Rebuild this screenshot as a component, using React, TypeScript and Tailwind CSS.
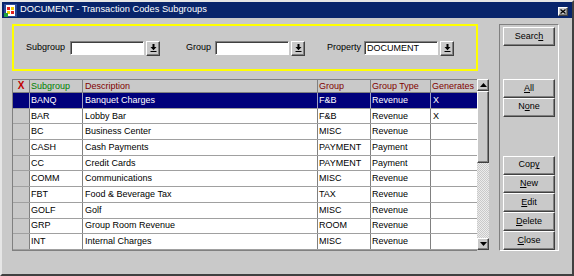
import React from 'react';

const raised =
  'border border-t-white border-l-white border-r-[#404040] border-b-[#404040] shadow-[inset_-1px_-1px_0_#808080]';
const sunken =
  'border border-t-[#808080] border-l-[#808080] border-r-white border-b-white shadow-[inset_1px_1px_0_#404040]';

type Row = { code: string; desc: string; group: string; type: string; gen: string };

const rows: Row[] = [
  { code: 'BANQ', desc: 'Banquet Charges', group: 'F&B', type: 'Revenue', gen: 'X' },
  { code: 'BAR', desc: 'Lobby Bar', group: 'F&B', type: 'Revenue', gen: 'X' },
  { code: 'BC', desc: 'Business Center', group: 'MISC', type: 'Revenue', gen: '' },
  { code: 'CASH', desc: 'Cash Payments', group: 'PAYMENT', type: 'Payment', gen: '' },
  { code: 'CC', desc: 'Credit Cards', group: 'PAYMENT', type: 'Payment', gen: '' },
  { code: 'COMM', desc: 'Communications', group: 'MISC', type: 'Revenue', gen: '' },
  { code: 'FBT', desc: 'Food & Beverage Tax', group: 'TAX', type: 'Revenue', gen: '' },
  { code: 'GOLF', desc: 'Golf', group: 'MISC', type: 'Revenue', gen: '' },
  { code: 'GRP', desc: 'Group Room Revenue', group: 'ROOM', type: 'Revenue', gen: '' },
  { code: 'INT', desc: 'Internal Charges', group: 'MISC', type: 'Revenue', gen: '' },
];

function DropButton() {
  return (
    <div className={`${raised} ml-[2px] w-[14px] h-[15px] bg-[#c9c9c9] flex items-center justify-center`}>
      <svg width="7" height="8" viewBox="0 0 7 8">
        <path d="M2.5 0h2v3h2L3.5 6.2 0.5 3h2z" fill="#000" />
        <rect x="0.5" y="7" width="6" height="1" fill="#000" />
      </svg>
    </div>
  );
}

function Field({ value = '' }: { value?: string }) {
  return (
    <div className="flex items-center">
      <div className={`${sunken} w-[74px] h-[14px] bg-white flex items-center pl-[2px] leading-none`}>
        {value}
      </div>
      <DropButton />
    </div>
  );
}

function Btn({ children, className = '' }: { children: React.ReactNode; className?: string }) {
  return (
    <div className={`${raised} w-[52px] h-[19px] flex items-center justify-center bg-[#c9c9c9] ${className}`}>
      {children}
    </div>
  );
}

function Arrow({ up }: { up?: boolean }) {
  return (
    <div className={`${raised} h-[12px] w-full bg-[#c9c9c9] flex items-center justify-center`}>
      <svg width="7" height="4" viewBox="0 0 7 4">
        <path d={up ? 'M3.5 0L7 4H0z' : 'M0 0h7L3.5 4z'} fill="#000" />
      </svg>
    </div>
  );
}

export default function App() {
  return (
    <div className="w-[574px] h-[276px] bg-[#c9c9c9] border-2 border-t-[#e6e6e6] border-l-[#e6e6e6] border-r-[#404040] border-b-[#404040] font-['Liberation_Sans',Arial,sans-serif] text-[9px] text-black flex flex-col overflow-hidden">
      {/* Title bar */}
      <div className="h-[16px] bg-[#08246b] flex items-center pl-[2px] pr-[4px]">
        <svg width="13" height="13" viewBox="0 0 13 13">
          <rect x="0" y="0" width="13" height="13" fill="#2a4a9a" />
          <rect x="2" y="1" width="9" height="11" fill="#fff" />
          <rect x="3" y="3" width="3" height="3" fill="#e02020" />
          <rect x="7" y="3" width="3" height="3" fill="#f0d000" />
          <rect x="3" y="7" width="3" height="3" fill="#f0d000" />
          <rect x="7" y="7" width="3" height="3" fill="#e02020" />
          <rect x="0" y="9" width="4" height="4" fill="#20a040" />
        </svg>
        <span className="ml-[3px] text-white text-[9.3px]">DOCUMENT - Transaction Codes Subgroups</span>
        <div className={`${raised} ml-auto mt-[3px] w-[10px] h-[9px] bg-[#c9c9c9] flex items-center justify-center`}>
          <svg width="6" height="5" viewBox="0 0 6 5">
            <path d="M0.5 0.5L5.5 4.5M5.5 0.5L0.5 4.5" stroke="#000" strokeWidth="1.3" />
          </svg>
        </div>
      </div>

      {/* Body */}
      <div className="flex pl-[10px]">
        <div className="w-[477px] flex flex-col">
          {/* Filter box */}
          <div className="mt-[6px] w-[466px] h-[47px] border-2 border-[#ffff00] flex items-center pl-[12px] pt-[1px]">
            <span>Subgroup</span>
            <div className="ml-[5px]">
              <Field />
            </div>
            <span className="ml-[26px]">Group</span>
            <div className="ml-[4px]">
              <Field />
            </div>
            <span className="ml-[22px]">Property</span>
            <div className="ml-[3px]">
              <Field value="DOCUMENT" />
            </div>
          </div>

          {/* Grid */}
          <div className="mt-[8px] flex">
            <div className="w-[465px] border-l border-t border-b border-[#808080] bg-white">
              <div className="flex h-[13px] bg-[#c9c9c9] border-b border-[#808080] leading-none">
                <div className="w-[17px] border-r border-[#808080] flex items-center justify-center text-[#c00000] font-bold text-[10px]">
                  X
                </div>
                <div className="w-[53px] border-r border-[#808080] flex items-center pl-[1px] text-[#008000]">Subgroup</div>
                <div className="w-[235px] border-r border-[#808080] flex items-center pl-[2px] text-[#800000]">Description</div>
                <div className="w-[53px] border-r border-[#808080] flex items-center pl-[1px] text-[#800000]">Group</div>
                <div className="w-[60px] border-r border-[#808080] flex items-center pl-[1px] text-[#800000]">Group Type</div>
                <div className="w-[46px] flex items-center pl-[1px] text-[#800000]">Generates</div>
              </div>
              {rows.map((r, i) => {
                const sel = i === 0;
                const cell = `border-r ${sel ? 'border-[#a0a0c0]' : 'border-[#808080]'} flex items-center`;
                return (
                  <div
                    key={r.code}
                    className={`flex h-[15.7px] leading-none border-b border-[#a0a0a0] ${sel ? 'bg-[#00007b] text-white' : 'text-black'}`}
                  >
                    <div className={`w-[17px] ${cell} ${sel ? '' : 'bg-[#c9c9c9]'}`} />
                    <div className={`w-[53px] ${cell} pl-[1px]`}>{r.code}</div>
                    <div className={`w-[235px] ${cell} pl-[2px]`}>{r.desc}</div>
                    <div className={`w-[53px] ${cell} pl-[1px]`}>{r.group}</div>
                    <div className={`w-[60px] ${cell} pl-[1px]`}>{r.type}</div>
                    <div className="w-[46px] flex items-center pl-[2px]">{r.gen}</div>
                  </div>
                );
              })}
            </div>
            {/* Scrollbar */}
            <div className="w-[12px] flex flex-col h-[171px]">
              <Arrow up />
              <div className={`${raised} h-[72px] bg-[#c9c9c9]`} />
              <div className="flex-1 bg-[repeating-conic-gradient(#ececec_0_25%,#c9c9c9_0_50%)] bg-[length:2px_2px]" />
              <Arrow />
            </div>
          </div>
        </div>

        {/* Button panel */}
        <div className="ml-[10px] mt-[6px] w-[60px] h-[227px] border border-t-[#808080] border-l-[#808080] border-r-white border-b-white flex flex-col items-center pt-[2px]">
          <Btn>
            <span>
              Searc<u>h</u>
            </span>
          </Btn>
          <Btn className="mt-[33px]">
            <u>A</u>ll
          </Btn>
          <Btn>
            <span>
              N<u>o</u>ne
            </span>
          </Btn>
          <Btn className="mt-[39px]">
            <span>
              Cop<u>y</u>
            </span>
          </Btn>
          <Btn>
            <span>
              <u>N</u>ew
            </span>
          </Btn>
          <Btn>
            <span>
              <u>E</u>dit
            </span>
          </Btn>
          <Btn>
            <span>
              <u>D</u>elete
            </span>
          </Btn>
          <Btn>
            <span>
              <u>C</u>lose
            </span>
          </Btn>
        </div>
      </div>
    </div>
  );
}
